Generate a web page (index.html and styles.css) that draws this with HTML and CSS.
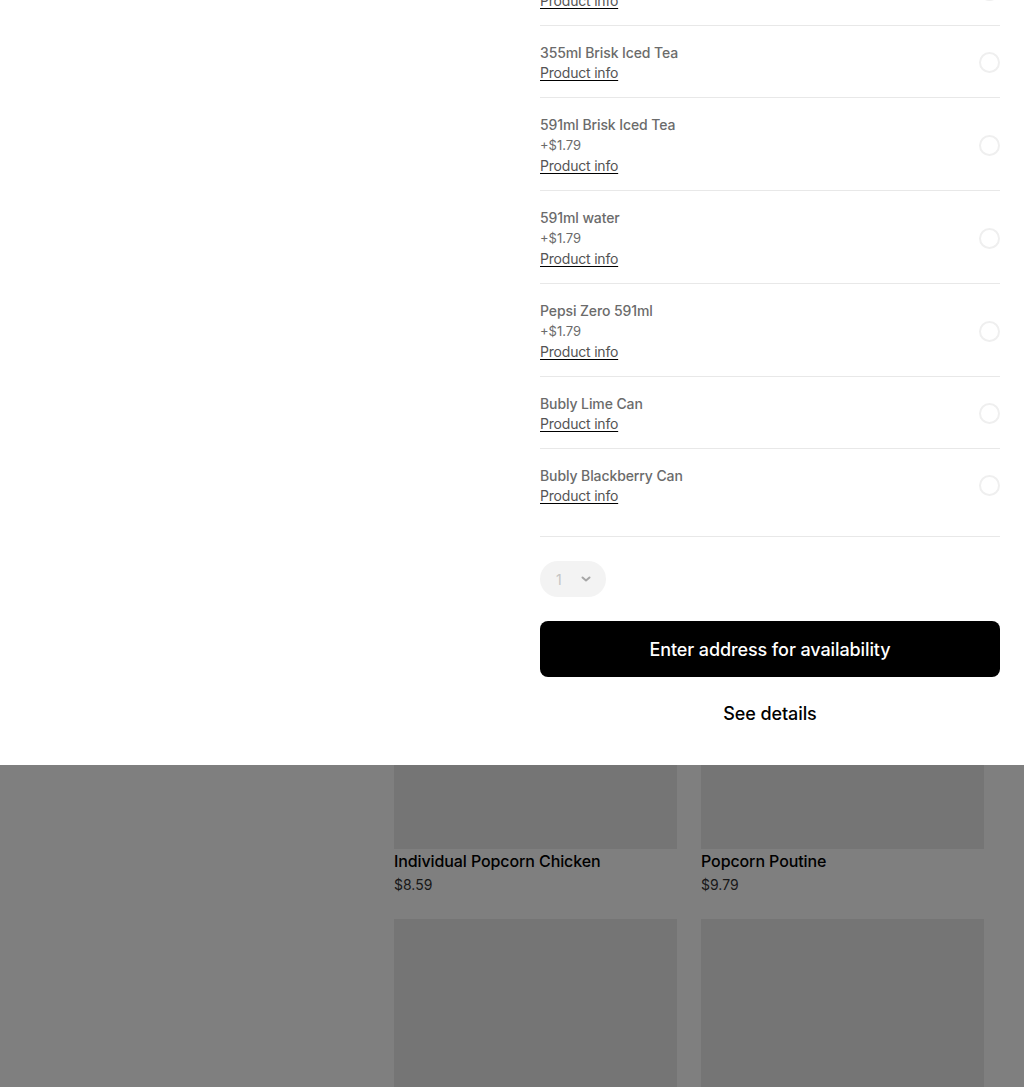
FILE: index.html
```html
<!DOCTYPE html>
<html lang="en">
<head>
  <meta charset="UTF-8">
  <title>Menu - Drinks</title>
  <meta name="viewport" content="width=device-width, initial-scale=1.0">
  <link rel="stylesheet" href="styles.css">
</head>
<body>
  <div class="page">
    <aside class="sidebar"></aside>
    <main class="menu">
      <div class="card">
        <div class="card-img"></div>
        <div class="card-title">Individual Popcorn Chicken</div>
        <div class="card-price">$8.59</div>
      </div>
      <div class="card">
        <div class="card-img"></div>
        <div class="card-title">Popcorn Poutine</div>
        <div class="card-price">$9.79</div>
      </div>
      <div class="card">
        <div class="card-img"></div>
      </div>
      <div class="card">
        <div class="card-img"></div>
      </div>
    </main>
  </div>

  <div class="overlay"></div>

  <div class="modal">
    <div class="modal-media"></div>
    <div class="modal-details">
      <div class="options">
        <div class="option">
          <div class="option-text">
            <div class="option-name">Pepsi 355ml</div>
            <a class="option-info" href="#">Product info</a>
          </div>
          <span class="radio"></span>
        </div>
        <div class="option">
          <div class="option-text">
            <div class="option-name">355ml Brisk Iced Tea</div>
            <a class="option-info" href="#">Product info</a>
          </div>
          <span class="radio"></span>
        </div>
        <div class="option">
          <div class="option-text">
            <div class="option-name">591ml Brisk Iced Tea</div>
            <div class="option-price">+$1.79</div>
            <a class="option-info" href="#">Product info</a>
          </div>
          <span class="radio"></span>
        </div>
        <div class="option">
          <div class="option-text">
            <div class="option-name">591ml water</div>
            <div class="option-price">+$1.79</div>
            <a class="option-info" href="#">Product info</a>
          </div>
          <span class="radio"></span>
        </div>
        <div class="option">
          <div class="option-text">
            <div class="option-name">Pepsi Zero 591ml</div>
            <div class="option-price">+$1.79</div>
            <a class="option-info" href="#">Product info</a>
          </div>
          <span class="radio"></span>
        </div>
        <div class="option">
          <div class="option-text">
            <div class="option-name">Bubly Lime Can</div>
            <a class="option-info" href="#">Product info</a>
          </div>
          <span class="radio"></span>
        </div>
        <div class="option">
          <div class="option-text">
            <div class="option-name">Bubly Blackberry Can</div>
            <a class="option-info" href="#">Product info</a>
          </div>
          <span class="radio"></span>
        </div>
      </div>

      <div class="qty">
        <span class="qty-value">1</span>
        <svg class="qty-chevron" width="12" height="12" viewBox="0 0 12 12">
          <path d="M2.5 4.5 6 7.5l3.5-3" fill="none" stroke="currentColor" stroke-width="2" stroke-linecap="round" stroke-linejoin="round"/>
        </svg>
      </div>

      <button class="cta">Enter address for availability</button>
      <button class="link-btn">See details</button>
    </div>
  </div>
</body>
</html>
```

FILE: styles.css
```css
* {
  box-sizing: border-box;
  margin: 0;
  padding: 0;
}

body {
  font-family: Inter, 'Noto Sans', sans-serif;
  background: #fff;
  color: #000;
  overflow: hidden;
}

/* page behind the modal */
.page {
  display: flex;
  gap: 24px;
  padding: 609px 40px 0 0;
}

.sidebar {
  width: 370px;
  flex-shrink: 0;
}

.menu {
  display: grid;
  grid-template-columns: 283px 283px;
  column-gap: 24px;
  row-gap: 24px;
}

.card-img {
  height: 240px;
  background: #ebebeb;
}

.card-title {
  font-size: 16px;
  font-weight: 500;
  line-height: 24px;
  letter-spacing: -0.1px;
}

.card-price {
  margin-top: 2px;
  font-size: 14px;
  line-height: 20px;
  color: #333;
}

.overlay {
  position: fixed;
  inset: 0;
  background: rgba(0, 0, 0, 0.5);
}

/* modal */
.modal {
  position: fixed;
  top: 0;
  left: 0;
  right: 0;
  height: 765px;
  background: #fff;
  display: grid;
  grid-template-columns: 1fr 460px;
  column-gap: 24px;
  padding: 0 24px;
  overflow: hidden;
}

.modal-details {
  display: flex;
  flex-direction: column;
  justify-content: flex-end;
  padding-bottom: 24px;
  overflow: hidden;
}

.modal-details > * {
  flex-shrink: 0;
}

.option {
  display: flex;
  align-items: center;
  justify-content: space-between;
  padding: 17px 0 15px;
  border-bottom: 1px solid #e8e8e8;
}

.option:last-child {
  padding-bottom: 31px;
}

.option-name {
  font-size: 14px;
  font-weight: 500;
  line-height: 20px;
  letter-spacing: -0.1px;
  color: #6b6b6b;
}

.option-price {
  font-size: 13px;
  line-height: 21px;
  color: #6b6b6b;
}

.option-info {
  display: block;
  font-size: 14px;
  line-height: 19px;
  letter-spacing: -0.2px;
  color: #545454;
  text-decoration: underline;
  text-decoration-color: #000;
  text-underline-offset: 2px;
}

.radio {
  width: 21px;
  height: 21px;
  border: 2px solid #efefef;
  border-radius: 50%;
}

.qty {
  margin-top: 24px;
  width: 66px;
  height: 36px;
  border-radius: 18px;
  background: #f3f3f3;
  display: flex;
  align-items: center;
  padding-left: 16px;
  gap: 18px;
  color: #a6a6a6;
}

.qty-value {
  font-size: 14px;
  color: #c4c4c4;
}

.cta {
  margin-top: 24px;
  height: 56px;
  border: none;
  border-radius: 8px;
  background: #000;
  color: #fff;
  font-family: inherit;
  font-size: 18px;
  font-weight: 500;
  letter-spacing: -0.1px;
  cursor: pointer;
}

.link-btn {
  margin-top: 8px;
  height: 56px;
  border: none;
  background: none;
  color: #000;
  font-family: inherit;
  font-size: 18px;
  font-weight: 500;
  letter-spacing: -0.1px;
  cursor: pointer;
}
```
